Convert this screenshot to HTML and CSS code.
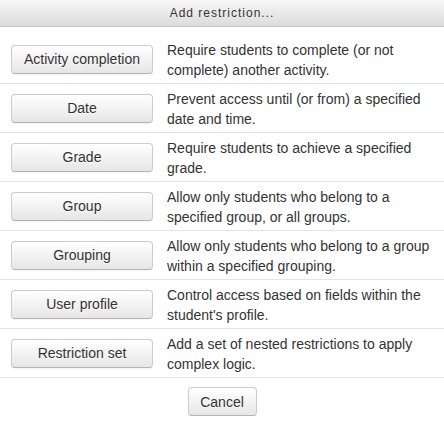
FILE: index.html
```html
<!DOCTYPE html>
<html>
<head>
<meta charset="utf-8">
<link rel="stylesheet" href="styles.css">
</head>
<body>
<div class="dialog">
  <div class="dialog-hd">Add restriction...</div>
  <div class="dialog-bd">
    <div class="opt-row">
      <div class="opt-btn-cell"><button class="btn btn-wide">Activity completion</button></div>
      <div class="opt-desc">Require students to complete (or not complete) another activity.</div>
    </div>
    <div class="opt-row">
      <div class="opt-btn-cell"><button class="btn btn-wide">Date</button></div>
      <div class="opt-desc">Prevent access until (or from) a specified date and time.</div>
    </div>
    <div class="opt-row">
      <div class="opt-btn-cell"><button class="btn btn-wide">Grade</button></div>
      <div class="opt-desc">Require students to achieve a specified grade.</div>
    </div>
    <div class="opt-row">
      <div class="opt-btn-cell"><button class="btn btn-wide">Group</button></div>
      <div class="opt-desc">Allow only students who belong to a specified group, or all groups.</div>
    </div>
    <div class="opt-row">
      <div class="opt-btn-cell"><button class="btn btn-wide">Grouping</button></div>
      <div class="opt-desc">Allow only students who belong to a group within a specified grouping.</div>
    </div>
    <div class="opt-row">
      <div class="opt-btn-cell"><button class="btn btn-wide">User profile</button></div>
      <div class="opt-desc">Control access based on fields within the student's profile.</div>
    </div>
    <div class="opt-row">
      <div class="opt-btn-cell"><button class="btn btn-wide">Restriction set</button></div>
      <div class="opt-desc">Add a set of nested restrictions to apply complex logic.</div>
    </div>
    <div class="dialog-ft">
      <button class="btn btn-cancel">Cancel</button>
    </div>
  </div>
</div>
</body>
</html>
```
FILE: styles.css
```css
html, body {
  margin: 0;
  padding: 0;
  background: #fff;
}
body {
  font-family: "Liberation Sans", Arial, Helvetica, sans-serif;
  font-size: 14px;
  color: #333;
}
.dialog {
  width: 444px;
}
.dialog-hd {
  height: 26px;
  line-height: 26px;
  font-size: 12px;
  text-align: center;
  letter-spacing: 1px;
  color: #333;
  background: linear-gradient(to bottom, #f7f7f7 0%, #dcdcdc 100%);
  border-bottom: 1px solid #c4c4c4;
}
.dialog-bd {
  padding-top: 8px;
}
.opt-row {
  display: flex;
  align-items: center;
  height: 48px;
  border-bottom: 1px solid #e3e3e3;
}
.opt-btn-cell {
  width: 142px;
  padding-left: 11px;
  flex: none;
}
.opt-desc {
  width: 272px;
  flex: none;
  padding-left: 14px;
  padding-top: 2px;
  line-height: 20px;
}
.btn {
  font-family: "Liberation Sans", Arial, Helvetica, sans-serif;
  font-size: 14px;
  color: #333;
  height: 29px;
  padding: 0 8px;
  background: linear-gradient(to bottom, #ffffff 0%, #e6e6e6 100%);
  border: 1px solid #cccccc;
  border-bottom-color: #b3b3b3;
  border-radius: 4px;
  box-shadow: inset 0 1px 0 rgba(255,255,255,0.2), 0 1px 2px rgba(0,0,0,0.05);
  text-shadow: 0 1px 1px rgba(255,255,255,0.75);
  cursor: pointer;
}
.btn-wide {
  width: 142px;
}
.dialog-ft {
  display: flex;
  justify-content: center;
  padding-top: 9px;
}
.btn-cancel {
  width: 69px;
  padding: 0;
}
```
